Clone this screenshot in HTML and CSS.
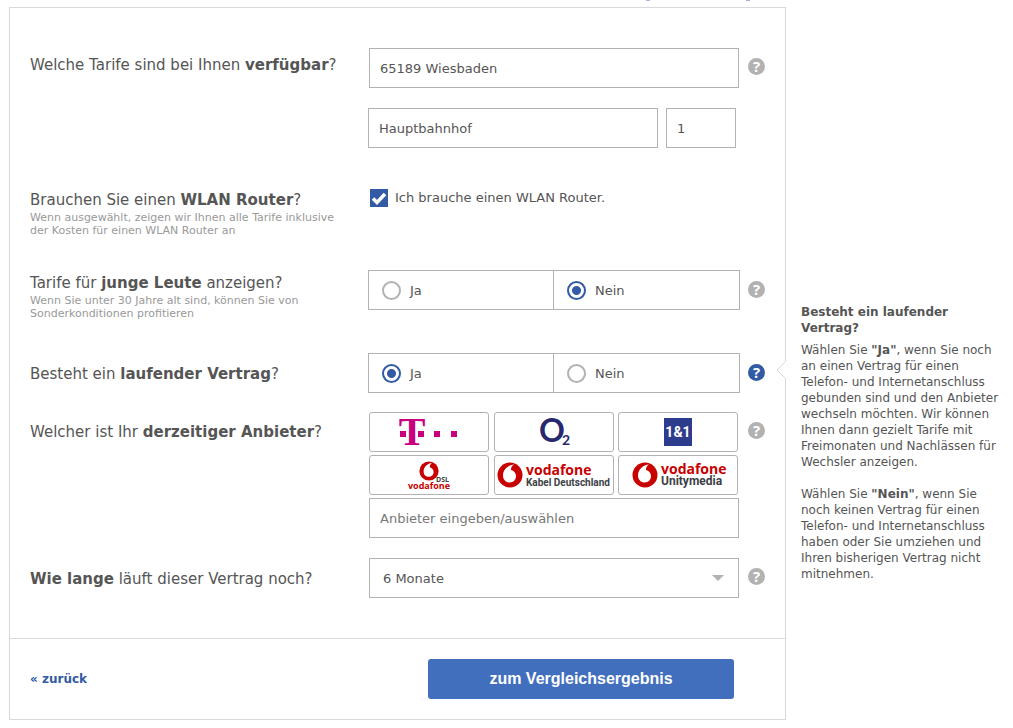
FILE: index.html
```html
<!DOCTYPE html>
<html lang="de">
<head>
<meta charset="utf-8">
<meta name="viewport" content="width=device-width, initial-scale=1">
<title>Tarifvergleich</title>
<link rel="stylesheet" href="styles.css">
</head>
<body>
<svg class="sprite" aria-hidden="true">
  <symbol id="voda" viewBox="0 0 26 26">
    <circle cx="13" cy="13" r="12.500" fill="#c80000"/>
    <path d="M17 2.500C11 3 6 7.500 6 13.500c0 4.300 3 7 6.700 7 3.600 0 6.300-2.700 6.300-6.200 0-3.300-2-5.600-5-6.300-.1-2.400 1-4.500 3-5.500z" fill="#fff"/>
  </symbol>
</svg>
<div class="topline" aria-hidden="true"><span></span><span></span></div>
<div class="page">
  <form class="panel">
    <div class="questions">
      <div class="row">
        <label class="question question--first" for="city">Welche Tarife sind bei Ihnen <b>verfügbar</b>?</label>
        <div class="controls controls--address">
          <input class="field field--inset" id="city" type="text" value="65189 Wiesbaden">
          <div class="street">
            <input class="field" type="text" value="Hauptbahnhof" aria-label="Straße">
            <input class="field" type="text" value="1" aria-label="Hausnummer">
          </div>
        </div>
        <button class="help" type="button">?</button>
      </div>

      <div class="row row--router">
        <div class="question question--sub">Brauchen Sie einen <b>WLAN Router</b>?
          <small class="hint">Wenn ausgewählt, zeigen wir Ihnen alle Tarife inklusive der Kosten für einen WLAN Router an</small>
        </div>
        <label class="check"><input class="check__box" type="checkbox" checked>Ich brauche einen WLAN Router.</label>
      </div>

      <div class="row row--spaced">
        <div class="question question--sub">Tarife für <b>junge Leute</b> anzeigen?
          <small class="hint">Wenn Sie unter 30 Jahre alt sind, können Sie von Sonderkonditionen profitieren</small>
        </div>
        <div class="choice">
          <label class="option"><input class="radio" type="radio" name="young">Ja</label>
          <label class="option"><input class="radio" type="radio" name="young" checked>Nein</label>
        </div>
        <button class="help help--choice" type="button">?</button>
      </div>

      <div class="row row--spaced">
        <div class="question">Besteht ein <b>laufender Vertrag</b>?</div>
        <div class="choice">
          <label class="option"><input class="radio" type="radio" name="contract" checked>Ja</label>
          <label class="option"><input class="radio" type="radio" name="contract">Nein</label>
        </div>
        <button class="help help--choice help--active" type="button">?</button>
        <svg class="notch" width="10" height="18" viewBox="0 0 10 18" aria-hidden="true"><path d="M10 .5H9.500L1 9l8.500 8.500H10z" fill="#fff"/><path d="M9.500 .5L1 9l8.500 8.500" fill="none" stroke="#d9d9d9"/></svg>
      </div>

      <div class="row row--provider">
        <label class="question question--provider" for="provider">Welcher ist Ihr <b>derzeitiger Anbieter</b>?</label>
        <div class="controls">
          <div class="providers">
            <button class="provider" type="button" aria-label="Telekom">
              <svg width="118" height="38" viewBox="0 0 118 38"><g fill="#c8007d"><text x="42" y="32" class="logo-t" text-anchor="middle">T</text><path d="M30 18h6v6h-6zM48 18h6v6h-6zM64 18h6v6h-6zM81 18h6v6h-6z"/></g></svg>
            </button>
            <button class="provider" type="button" aria-label="O2">
              <svg width="118" height="38" viewBox="0 0 118 38"><g fill="#28286e"><text x="44" y="29" class="logo-o">O</text><text x="67" y="32" class="logo-two">2</text></g></svg>
            </button>
            <button class="provider" type="button" aria-label="1&amp;1">
              <svg width="118" height="38" viewBox="0 0 118 38"><path d="M45 5h28v28H45z" fill="#2d3c8c"/><text x="59" y="24" class="logo-one" text-anchor="middle" fill="#fff">1&amp;1</text></svg>
            </button>
            <button class="provider" type="button" aria-label="Vodafone DSL">
              <svg width="118" height="38" viewBox="0 0 118 38"><use href="#voda" x="49" y="5" width="20" height="20"/><text x="66" y="26" class="logo-dsl" fill="#3c4146">DSL</text><text x="59" y="33" class="logo-small" text-anchor="middle" fill="#c80000">vodafone</text></svg>
            </button>
            <button class="provider" type="button" aria-label="Vodafone Kabel Deutschland">
              <svg width="118" height="38" viewBox="0 0 118 38"><use href="#voda" x="2" y="6" width="26" height="26"/><text x="31" y="19" class="logo-name" fill="#c80000">vodafone</text><text x="31" y="30" class="logo-sub" fill="#3c4146">Kabel Deutschland</text></svg>
            </button>
            <button class="provider" type="button" aria-label="Vodafone Unitymedia">
              <svg width="118" height="38" viewBox="0 0 118 38"><use href="#voda" x="13" y="6" width="26" height="26"/><text x="42" y="18" class="logo-name" fill="#c80000">vodafone</text><text x="42" y="29" class="logo-unity" fill="#3c4146">Unitymedia</text></svg>
            </button>
          </div>
          <input class="field field--inset" id="provider" type="text" placeholder="Anbieter eingeben/auswählen">
        </div>
        <button class="help" type="button">?</button>
      </div>

      <div class="row row--duration">
        <label class="question" for="duration"><b>Wie lange</b> läuft dieser Vertrag noch?</label>
        <div class="select-wrap">
          <select class="field field--select" id="duration"><option>6 Monate</option></select>
          <svg class="arrow" width="12" height="6" viewBox="0 0 12 6" aria-hidden="true"><path d="M0 0h12L6 6z" fill="#b2b2b2"/></svg>
        </div>
        <button class="help" type="button">?</button>
      </div>
    </div>
    <div class="actions">
      <a class="back" href="#">« zurück</a>
      <button class="submit" type="submit">zum Vergleichsergebnis</button>
    </div>
  </form>
  <aside class="info">
    <h2 class="info__title">Besteht ein laufender Vertrag?</h2>
    <p>Wählen Sie <b>"Ja"</b>, wenn Sie noch an einen Vertrag für einen Telefon- und Internetanschluss gebunden sind und den Anbieter wechseln möchten. Wir können Ihnen dann gezielt Tarife mit Freimonaten und Nachlässen für Wechsler anzeigen.</p>
    <p>Wählen Sie <b>"Nein"</b>, wenn Sie noch keinen Vertrag für einen Telefon- und Internetanschluss haben oder Sie umziehen und Ihren bisherigen Vertrag nicht mitnehmen.</p>
  </aside>
</div>
</body>
</html>
```

FILE: styles.css
```css
* { box-sizing: border-box; }
body {
  margin: 0;
  background: #fff;
  color: #555;
  font-family: Verdana, "DejaVu Sans", sans-serif;
  font-size: 13px;
}
button, input, select { font: inherit; color: inherit; margin: 0; }
.sprite { position: absolute; width: 0; height: 0; }

.topline { display: flex; justify-content: flex-end; gap: 96px; height: 7px; padding-right: 263px; }
.topline span { width: 4px; height: 1px; background: #a5b4e6; }

.page { display: grid; grid-template-columns: minmax(0, 1fr) 212px; gap: 15px; padding: 0 0 8px 9px; }
.panel { border: 1px solid #d9d9d9; }
.questions { padding: 40px 20px; }
.row { position: relative; display: grid; grid-template-columns: 338px minmax(0, 1fr) 17px; align-items: start; }
.row--router { margin-top: 39px; }
.row--spaced { margin-top: 33px; }
.row--provider { margin-top: 19px; }
.row--duration { margin-top: 20px; }

.question { padding-top: 12px; font-size: 15px; line-height: 18px; }
.question--first { padding-top: 8px; }
.question--sub { padding-top: 4px; }
.question--provider { padding-top: 11px; }
.hint { display: block; width: 320px; margin-top: 2px; color: #999; font-size: 11px; line-height: 13px; }

.controls, .choice, .select-wrap { margin-right: 8px; }
.controls { display: grid; gap: 3px; }
.controls--address { gap: 20px; }
.field { width: 100%; height: 40px; padding: 0 10px; border: 1px solid #b2b2b2; border-radius: 0; background: #fff; }
.field::placeholder { color: #777; opacity: 1; }
.field--inset { width: auto; margin: 0 1px; }
.street { display: grid; grid-template-columns: minmax(0, 1fr) 70px; gap: 8px; margin-right: 4px; }

.check { display: flex; align-items: center; gap: 7px; padding: 1px 0 0 2px; line-height: 20px; }
.check__box {
  appearance: none;
  width: 18px;
  height: 18px;
  background: #325aa5 url("data:image/svg+xml,%3Csvg xmlns='http://www.w3.org/2000/svg' viewBox='0 0 18 18'%3E%3Cpath d='M3 9.500l4 4 8-8.500' fill='none' stroke='white' stroke-width='3.500'/%3E%3C/svg%3E");
}

.choice { display: grid; grid-template-columns: 1fr 1fr; border: 1px solid #b2b2b2; }
.option { display: flex; align-items: center; gap: 9px; height: 38px; padding-left: 13px; border-right: 1px solid #b2b2b2; }
.option + .option { border-right: 0; }
.radio { appearance: none; width: 19px; height: 19px; border: 2px solid #b2b2b2; border-radius: 50%; }
.radio:checked { border-color: #325aa5; background: radial-gradient(circle, #325aa5 4px, #fff 5px); }

.help {
  width: 17px;
  height: 17px;
  margin-top: 10px;
  padding: 0;
  border: 0;
  border-radius: 50%;
  background: #b2b2b2;
  color: #fff;
  font: bold 15px/17px "Open Sans", "Noto Sans", sans-serif;
  text-align: center;
}
.help--choice { margin-top: 11px; }
.help--active { background: #325aa5; }
.notch { position: absolute; top: 8px; right: -21px; }

.providers { display: grid; grid-template-columns: repeat(3, 120px); justify-content: space-between; gap: 3px 4px; margin: 0 2px 0 1px; }
.provider { display: flex; justify-content: center; height: 40px; padding: 0; border: 1px solid #b2b2b2; border-radius: 3px; background: #fff; }
.logo-t { font: bold 40px "Liberation Serif", serif; }
.logo-o { font: bold 32px Lato, sans-serif; }
.logo-two { font: bold 14px Lato, sans-serif; }
.logo-one { font: bold 14px Roboto, sans-serif; }
.logo-name { font: bold 14px "Open Sans", sans-serif; }
.logo-small { font: bold 9px "Open Sans", sans-serif; }
.logo-dsl { font: bold 7px "Open Sans", sans-serif; }
.logo-sub { font: bold 10px Roboto, sans-serif; }
.logo-unity { font: bold 12px Roboto, sans-serif; }

.select-wrap { position: relative; padding: 0 1px; }
.field--select { display: block; appearance: none; padding: 0 13px; }
.arrow { position: absolute; top: 17px; right: 16px; }

.actions { display: flex; align-items: center; justify-content: space-between; padding: 20px 51px 20px 20px; border-top: 1px solid #d9d9d9; }
.back { color: #325aa5; font-size: 12px; font-weight: bold; text-decoration: none; }
.submit { width: 306px; height: 40px; padding: 0; border: 0; border-radius: 3px; background: #416fbe; color: #fff; font: bold 16px "Liberation Sans", Arial, sans-serif; }

.info { padding: 297px 10px 0 0; font-size: 12px; line-height: 16px; }
.info__title { margin: 0 0 6px; font-size: 12px; line-height: 16px; }
.info p { margin: 0 0 16px; }
```
